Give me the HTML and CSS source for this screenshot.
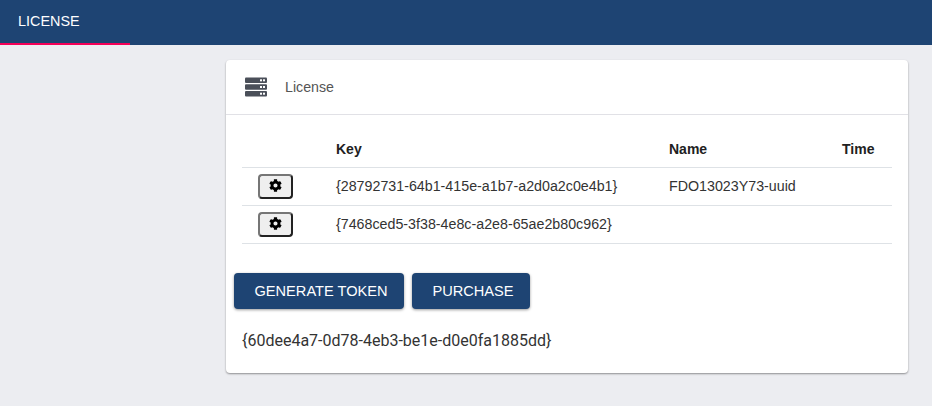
FILE: index.html
```html
<!DOCTYPE html>
<html>
<head>
    <title>License</title>
    <link rel="stylesheet" href="styles.css">
</head>
<body>
    <div class="tabs">
        <div class="tab">LICENSE</div>
    </div>
    <div class="main">
        <div class="card">
            <div class="card-header">
                <svg class="server-icon" viewBox="0 0 22 20">
                    <rect x="0" y="0.5" width="22" height="5.5" rx="1"/>
                    <rect x="0" y="7.2" width="22" height="5.5" rx="1"/>
                    <rect x="0" y="13.9" width="22" height="5.5" rx="1"/>
                    <rect class="led" x="15" y="2.3" width="2" height="2"/>
                    <rect class="led" x="18" y="2.3" width="2" height="2"/>
                    <rect class="led" x="15" y="9" width="2" height="2"/>
                    <rect class="led" x="18" y="9" width="2" height="2"/>
                    <rect class="led" x="15" y="15.7" width="2" height="2"/>
                    <rect class="led" x="18" y="15.7" width="2" height="2"/>
                </svg>
                <span class="card-title">License</span>
            </div>
            <div class="card-body">
                <table class="keys">
                    <thead>
                        <tr>
                            <th class="col-action"></th>
                            <th class="col-key">Key</th>
                            <th class="col-name">Name</th>
                            <th class="col-time">Time</th>
                        </tr>
                    </thead>
                    <tbody>
                        <tr>
                            <td class="cell-action">
                                <button class="gear-btn">
                                    <svg class="gear" viewBox="0 0 512 512"><path d="M487.4 315.7l-42.6-24.6c4.3-23.2 4.3-47 0-70.2l42.6-24.6c4.9-2.8 7.1-8.6 5.5-14-11.1-35.6-30-67.8-54.7-94.6-3.8-4.1-10-5.1-14.8-2.3L380.8 110c-17.9-15.4-38.5-27.3-60.8-35.1V25.8c0-5.6-3.9-10.5-9.4-11.7-36.7-8.2-74.3-7.8-109.2 0-5.5 1.2-9.4 6.1-9.4 11.7V75c-22.2 7.9-42.8 19.8-60.8 35.1L88.7 85.5c-4.9-2.8-11-1.9-14.8 2.3-24.7 26.7-43.6 58.9-54.7 94.6-1.7 5.4.6 11.2 5.5 14L67.3 221c-4.3 23.2-4.3 47 0 70.2l-42.6 24.6c-4.9 2.8-7.1 8.6-5.5 14 11.1 35.6 30 67.8 54.7 94.6 3.8 4.1 10 5.1 14.8 2.3l42.6-24.6c17.9 15.4 38.5 27.3 60.8 35.1v49.2c0 5.6 3.9 10.5 9.4 11.7 36.7 8.2 74.3 7.8 109.2 0 5.5-1.2 9.4-6.1 9.4-11.7v-49.2c22.2-7.9 42.8-19.8 60.8-35.1l42.6 24.6c4.9 2.8 11 1.9 14.8-2.3 24.7-26.7 43.6-58.9 54.7-94.6 1.5-5.5-.7-11.3-5.6-14.1zM256 336c-44.1 0-80-35.9-80-80s35.9-80 80-80 80 35.9 80 80-35.9 80-80 80z"/></svg>
                                </button>
                            </td>
                            <td>{28792731-64b1-415e-a1b7-a2d0a2c0e4b1}</td>
                            <td>FDO13023Y73-uuid</td>
                            <td></td>
                        </tr>
                        <tr>
                            <td class="cell-action">
                                <button class="gear-btn">
                                    <svg class="gear" viewBox="0 0 512 512"><path d="M487.4 315.7l-42.6-24.6c4.3-23.2 4.3-47 0-70.2l42.6-24.6c4.9-2.8 7.1-8.6 5.5-14-11.1-35.6-30-67.8-54.7-94.6-3.8-4.1-10-5.1-14.8-2.3L380.8 110c-17.9-15.4-38.5-27.3-60.8-35.1V25.8c0-5.6-3.9-10.5-9.4-11.7-36.7-8.2-74.3-7.8-109.2 0-5.5 1.2-9.4 6.1-9.4 11.7V75c-22.2 7.9-42.8 19.8-60.8 35.1L88.7 85.5c-4.9-2.8-11-1.9-14.8 2.3-24.7 26.7-43.6 58.9-54.7 94.6-1.7 5.4.6 11.2 5.5 14L67.3 221c-4.3 23.2-4.3 47 0 70.2l-42.6 24.6c-4.9 2.8-7.1 8.6-5.5 14 11.1 35.6 30 67.8 54.7 94.6 3.8 4.1 10 5.1 14.8 2.3l42.6-24.6c17.9 15.4 38.5 27.3 60.8 35.1v49.2c0 5.6 3.9 10.5 9.4 11.7 36.7 8.2 74.3 7.8 109.2 0 5.5-1.2 9.4-6.1 9.4-11.7v-49.2c22.2-7.9 42.8-19.8 60.8-35.1l42.6 24.6c4.9 2.8 11 1.9 14.8-2.3 24.7-26.7 43.6-58.9 54.7-94.6 1.5-5.5-.7-11.3-5.6-14.1zM256 336c-44.1 0-80-35.9-80-80s35.9-80 80-80 80 35.9 80 80-35.9 80-80 80z"/></svg>
                                </button>
                            </td>
                            <td>{7468ced5-3f38-4e8c-a2e8-65ae2b80c962}</td>
                            <td></td>
                            <td></td>
                        </tr>
                    </tbody>
                </table>
                <div class="actions">
                    <button class="action-btn btn-generate">GENERATE TOKEN</button>
                    <button class="action-btn btn-purchase">PURCHASE</button>
                </div>
                <div class="token">{60dee4a7-0d78-4eb3-be1e-d0e0fa1885dd}</div>
            </div>
        </div>
    </div>
</body>
</html>
```

FILE: styles.css
```css
html, body{
    margin: 0;
    padding: 0;
}
body{
    height: 406px;
    overflow: hidden;
    background: #ECEDF1;
    font-family: "Liberation Sans", Arial, sans-serif;
    color: #212529;
}
.tabs{
    height: 45px;
    background: #1E4473;
}
.tab{
    box-sizing: border-box;
    width: 130px;
    height: 45px;
    padding: 13px 0 0 18px;
    border-bottom: 2px solid #F50057;
    color: #fff;
    font-size: 14.4px;
    line-height: 16px;
}
.main{
    padding: 15px 24px 0 226px;
}
.card{
    height: 313px;
    box-sizing: border-box;
    background: #fff;
    border-radius: 4px;
    box-shadow: 0 1px 2px rgba(0, 0, 0, 0.4);
}
.card-header{
    display: flex;
    align-items: center;
    height: 54px;
    padding-left: 19px;
    border-bottom: 1px solid #E1E1E6;
}
.server-icon{
    width: 22px;
    height: 20px;
    fill: #4A4F59;
}
.server-icon .led{
    fill: #fff;
}
.card-title{
    margin-left: 18px;
    font-size: 14.2px;
    color: #555;
}
.card-body{
    padding: 15px 16px 0 8px;
}
.keys{
    width: 650px;
    margin-left: 8px;
    border-collapse: collapse;
    table-layout: fixed;
    font-size: 14.25px;
    color: #333;
}
.keys th{
    height: 37px;
    padding: 0;
    text-align: left;
    font-size: 14px;
    color: #212121;
    border-bottom: 1px solid #DEE2E6;
}
.keys td{
    box-sizing: border-box;
    height: 38px;
    padding: 0 0 2px;
    border-bottom: 1px solid #DEE2E6;
}
.col-action{
    width: 94px;
}
.col-key{
    width: 333px;
}
.col-name{
    width: 173px;
}
.keys .cell-action{
    padding: 0 0 0 16px;
}
.gear-btn{
    display: flex;
    align-items: center;
    justify-content: center;
    box-sizing: border-box;
    width: 35px;
    height: 25px;
    padding: 0;
    background: #EFEFEF;
    border: 2px solid;
    border-color: #767676 #222 #222 #767676;
    border-radius: 4px;
}
.gear{
    width: 13px;
    height: 13px;
    margin-bottom: 2px;
}
.actions{
    display: flex;
    gap: 8px;
    margin-top: 29px;
}
.action-btn{
    height: 36px;
    padding: 0 0 0 4px;
    background: #1E4473;
    color: #fff;
    border: none;
    border-radius: 4px;
    font-family: "Liberation Sans", Arial, sans-serif;
    font-size: 14.6px;
    box-shadow: 0 1px 3px rgba(0, 0, 0, 0.4);
}
.btn-generate{
    width: 170px;
}
.btn-purchase{
    width: 118px;
}
.token{
    margin: 22px 0 0 8px;
    font-family: Roboto, sans-serif;
    font-size: 16px;
    line-height: 20px;
    color: #333;
}
```
